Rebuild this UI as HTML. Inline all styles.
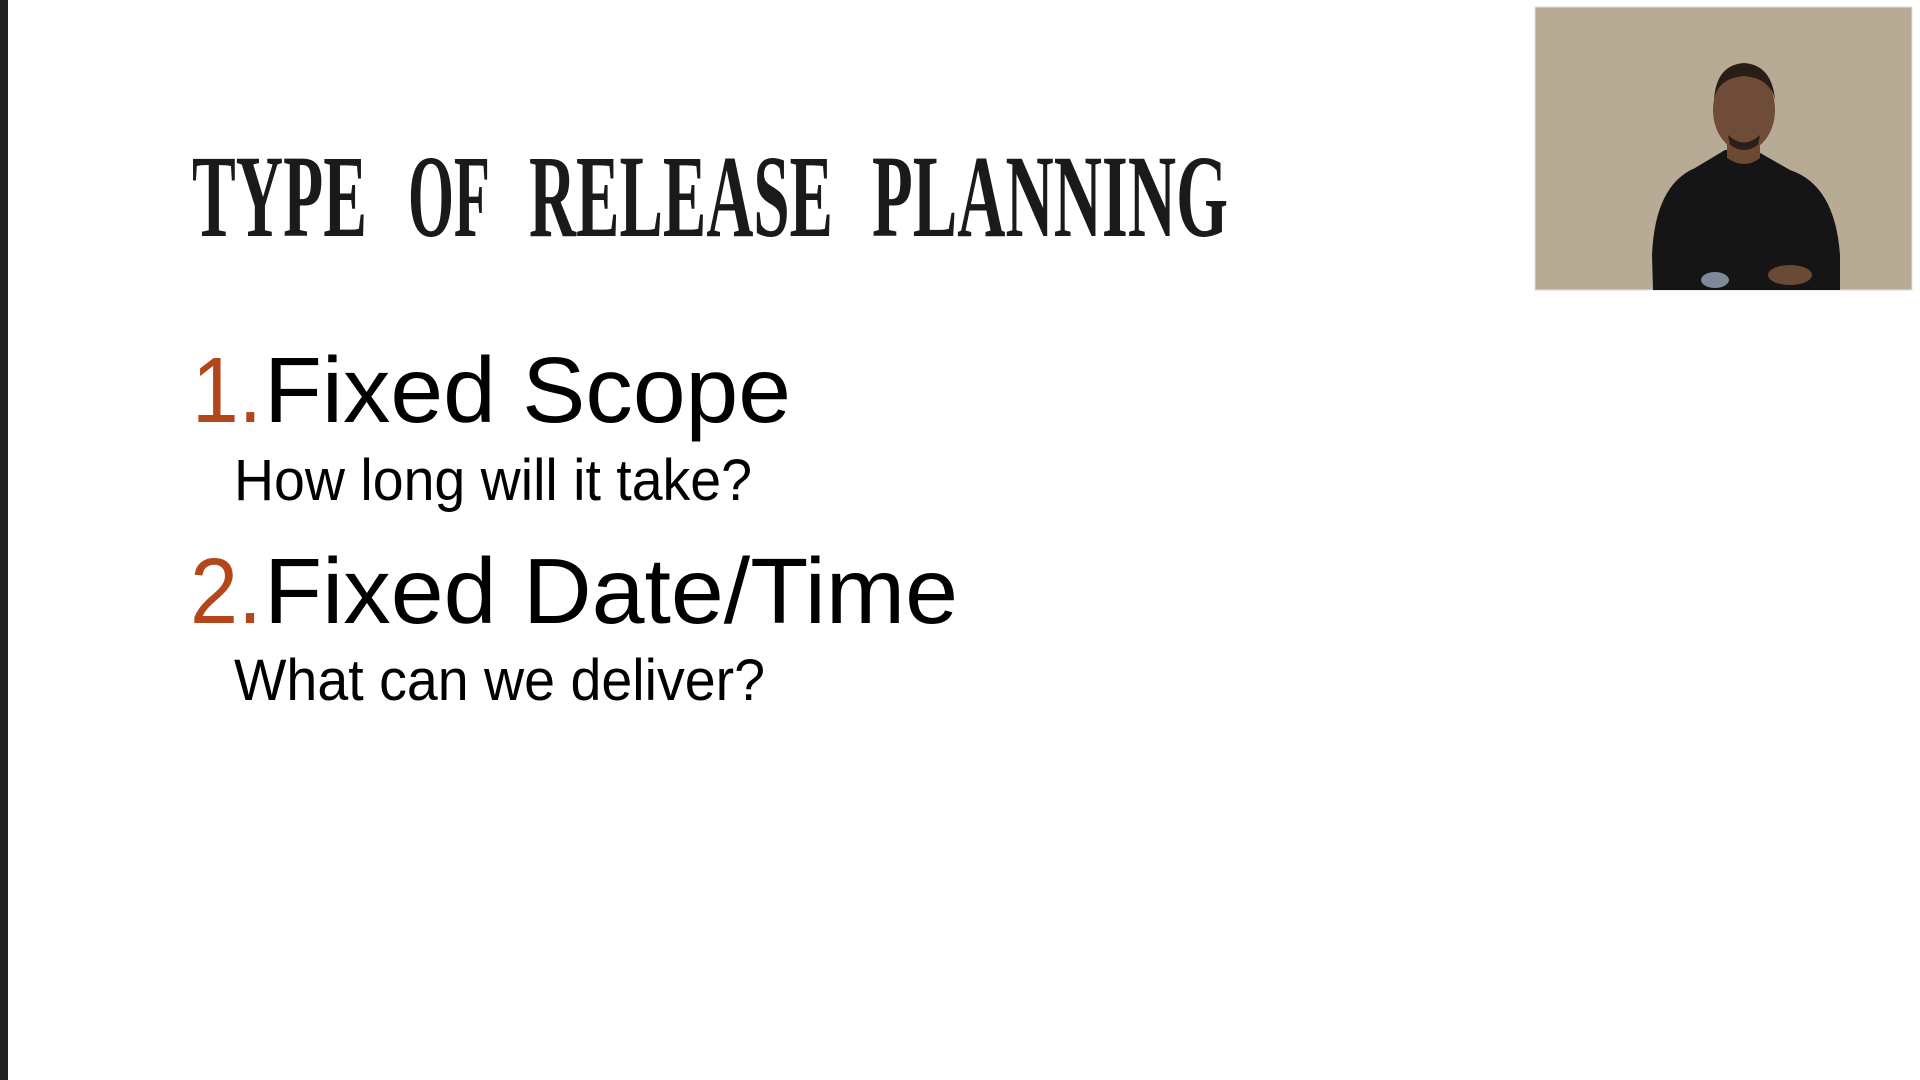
<!DOCTYPE html>
<html><head><meta charset="utf-8"><style>
html,body{margin:0;padding:0;background:#fff;width:1920px;height:1080px;overflow:hidden}
</style></head><body>
<svg width="1920" height="1080" viewBox="0 0 1920 1080" xmlns="http://www.w3.org/2000/svg" style="position:absolute;left:0;top:0">
<rect x="0" y="0" width="1920" height="1080" fill="#fff"/>
<rect x="0" y="0" width="8" height="1080" fill="#222"/>
<g font-family="Liberation Serif, serif" font-weight="bold" font-size="118" fill="#1a1a1a" lengthAdjust="spacingAndGlyphs">
<text x="192" y="236" textLength="175" lengthAdjust="spacingAndGlyphs">TYPE</text>
<text x="408" y="236" textLength="82" lengthAdjust="spacingAndGlyphs">OF</text>
<text x="529" y="236" textLength="304" lengthAdjust="spacingAndGlyphs">RELEASE</text>
<text x="872" y="236" textLength="356" lengthAdjust="spacingAndGlyphs">PLANNING</text>
</g>
<g font-family="Liberation Sans, Arial, sans-serif">
<text x="192" y="422" font-size="93" fill="#b4461c" textLength="70" lengthAdjust="spacingAndGlyphs">1.</text>
<text x="264" y="422" font-size="93" fill="#000" textLength="527" lengthAdjust="spacingAndGlyphs">Fixed Scope</text>
<text x="234" y="500" font-size="58" fill="#000" textLength="518" lengthAdjust="spacingAndGlyphs">How long will it take?</text>
<text x="190" y="623" font-size="93" fill="#b4461c" textLength="72" lengthAdjust="spacingAndGlyphs">2.</text>
<text x="264" y="623" font-size="93" fill="#000" textLength="694" lengthAdjust="spacingAndGlyphs">Fixed Date/Time</text>
<text x="234" y="700" font-size="58" fill="#000" textLength="531" lengthAdjust="spacingAndGlyphs">What can we deliver?</text>
</g>
<rect x="1535" y="7" width="377" height="283" fill="#b8ab96"/>
<rect x="1535" y="7" width="377" height="283" fill="none" stroke="#ddd" stroke-width="1"/>
<path d="M1653 290 L1652 255 Q1655 185 1695 168 L1725 150 L1755 150 L1790 170 Q1835 185 1840 255 L1840 290 Z" fill="#151515"/>
<path d="M1727 140 L1727 158 Q1745 170 1760 158 L1760 140 Z" fill="#6b4a35"/>
<ellipse cx="1744" cy="110" rx="31" ry="41" fill="#6e4c37"/>
<path d="M1714 100 Q1716 65 1744 63 Q1772 65 1775 100 Q1770 78 1744 76 Q1718 78 1714 100 Z" fill="#2a1d17"/>
<path d="M1728 135 Q1744 150 1760 135 L1758 145 Q1744 155 1730 145 Z" fill="#2c1e18"/>
<ellipse cx="1715" cy="280" rx="14" ry="8" fill="#7d8a98"/>
<ellipse cx="1790" cy="275" rx="22" ry="10" fill="#6b4a35"/>
</svg>
</body></html>
